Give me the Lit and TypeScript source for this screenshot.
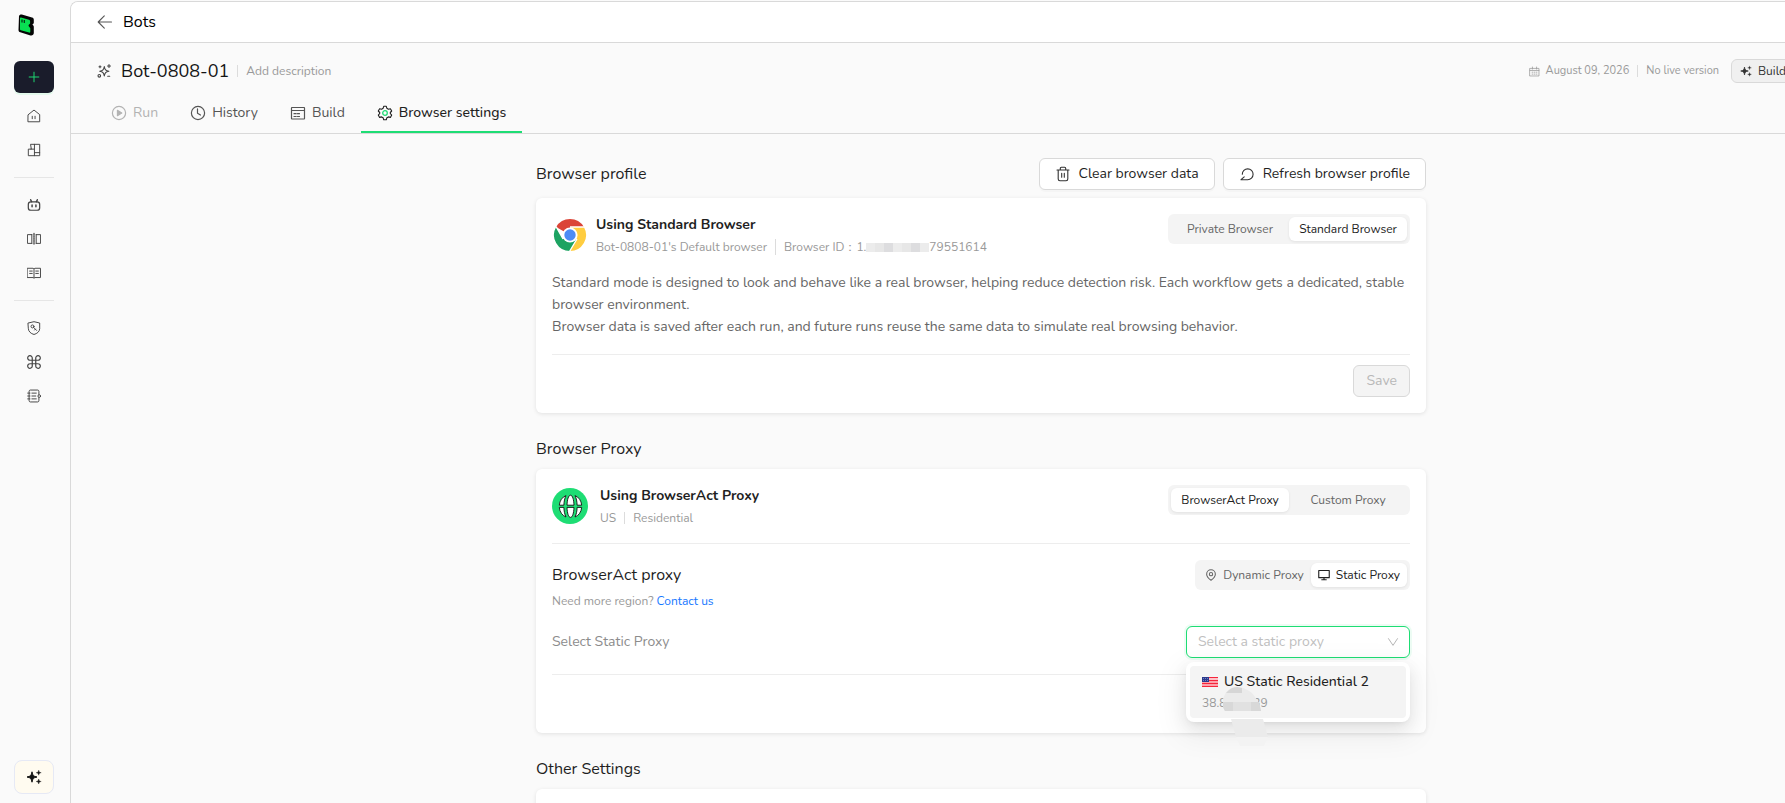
import { LitElement, html, css, svg, nothing, type TemplateResult } from "lit";
import { customElement, property, state } from "lit/decorators.js";

const line = (body: unknown, size = 16, view = 16) => html`<svg
  width=${size} height=${size} viewBox="0 0 ${view} ${view}" fill="none" stroke="currentColor"
  stroke-width="1.1" stroke-linecap="round" stroke-linejoin="round" aria-hidden="true">${body}</svg>`;

const sparkles = (size: number) => html`<svg width=${size} height=${size} viewBox="0 0 16 16" fill="currentColor" aria-hidden="true">
  <path d="M6 2.8C6.6 6.4 7.4 7.3 11 8 7.4 8.7 6.6 9.6 6 13.2 5.4 9.6 4.6 8.7 1 8 4.6 7.3 5.4 6.4 6 2.8Z" stroke="currentColor" stroke-width="1"/>
  <path d="M12.7 1.2c.3 1.7.7 2.200 2.500 2.500-1.800.3-2.200.8-2.500 2.500-.3-1.700-.7-2.200-2.500-2.500 1.800-.3 2.200-.8 2.500-2.500Z" stroke="currentColor" stroke-width=".4"/>
  <path d="M12.7 10c.3 1.700.7 2.200 2.500 2.500-1.800.3-2.200.8-2.500 2.500-.3-1.700-.7-2.200-2.500-2.500 1.800-.3 2.200-.8 2.500-2.500Z" stroke="currentColor" stroke-width=".4"/>
</svg>`;

const icons = {
  home: line(svg`<path d="M1.500 6.400 8 1.200l6.500 5.200v8.200h-13Z"/><path d="M6 8.300v2.800M9.200 8.300v2.800"/>`),
  layout: line(svg`<path d="M4.500 1.500h10v13h-13V7h3ZM4.500 7h3.500M8.500 1.500v13M8.500 11h6"/>`),
  bot: line(svg`<rect x="1.500" y="4.500" width="13" height="9.500" rx="3" stroke-width="1.400"/><path d="M4.200 2 5.200 4.300M11.800 2l-1 2.300M5.800 8v2M10.200 8v2" stroke-width="1.700"/>`),
  columns: line(svg`<path d="M5.500 3h-5v10h5M10.500 3h5v10h-5M5.500 3v10M10.500 3v10"/><path d="M8 2v12" stroke-width="2.200" stroke-dasharray="1 1.600" opacity=".7"/>`),
  book: line(svg`<path d="M.6 2.600h6.400l1 .8 1-.8h6.400v10.600H9l-1 .8-1-.8H.6ZM8 4v9.500M3 5.800h3M3 8.500h3M10 5.800h3M10 8.500h3"/>`),
  shield: line(svg`<path d="M1.500 2.300 8 .8l6.500 1.500v6.500C14.500 12 11.500 14.500 8 15.400 4.500 14.500 1.500 12 1.500 8.800Z"/><circle cx="6.300" cy="6.200" r="1.700"/><path d="m7.600 7.400 3.400 3.400M9.600 9.300l-.9 1"/>`),
  command: line(svg`<path d="M6 6h4v4H6ZM6 6H3.600A2.600 2.600 0 1 1 6 3.400ZM10 6V3.400A2.600 2.600 0 1 1 12.400 6ZM10 10h2.400A2.600 2.600 0 1 1 10 12.600ZM6 10v2.600A2.600 2.600 0 1 1 3.600 10Z" stroke-width="1.400"/>`),
  notebook: line(svg`<path d="M13.600 6.400V2.600c0-.8-.6-1.400-1.400-1.400H3.800c-.8 0-1.400.6-1.400 1.400v10.800c0 .8.6 1.400 1.400 1.400h8.400c.8 0 1.400-.6 1.400-1.400V9.800M.8 4.700h2.600M.8 8h2.600M.8 11.300h2.600M5.600 4.700h5M5.600 8h4.400M5.600 11.300h5"/><circle cx="14" cy="8.100" r="1.500"/>`),
  back: line(svg`<path d="M14.500 8h-13M7.300 1.800 1.200 8l6.100 6.200"/>`),
  magic: line(svg`<path d="M8.300 3.500c.6 3.300 1.400 4.100 4.600 4.700-3.200.6-4 1.400-4.600 4.700-.6-3.300-1.400-4.100-4.600-4.700 3.200-.6 4-1.400 4.600-4.700Z"/><path d="M13 1.500v3M11.500 3h3M4 2.800v2M3 3.800h2M11.700 13.200h2"/><circle cx="3.300" cy="12.800" r="1.300"/>`),
  run: line(svg`<circle cx="8" cy="8" r="6.600" stroke-width="1.200"/><path d="M6.400 5.300v5.400L10.800 8Z" fill="currentColor"/>`),
  history: line(svg`<circle cx="8" cy="8" r="6.600" stroke-width="1.200"/><path d="M7.500 3.800v4.500l3 1.700" stroke-width="1.200"/>`),
  build: line(svg`<rect x="1.500" y="2.500" width="13" height="11.500" rx=".4" stroke-width="1.200"/><path d="M1.500 5.500h13M4 8.700h2.200M7.500 8.700h2M4 11.500h2.200M7.500 11.500h2" stroke-width="1.200"/>`),
  gear: line(svg`<path d="M6.700 1.300h2.600l.6 2 1.500.9 2-.5 1.300 2.300-1.400 1.500v1l1.400 1.600-1.300 2.300-2-.5-1.500.8-.6 2.100H6.700L6.100 12.700 4.600 11.900l-2 .5-1.300-2.300 1.400-1.600v-1L1.300 6l1.300-2.300 2 .5 1.500-.9Z"/><circle cx="8" cy="8" r="2.300" stroke="#1edd74" stroke-width="1.300"/>`),
  calendar: line(svg`<path d="M1.500 3.500h13v11h-13ZM1.500 6.500h13M5 1.500v3M11 1.500v3"/><path d="M4.500 9h1M7.500 9h1M10.500 9h1M4.500 11.800h1M7.500 11.800h1M10.500 11.800h1"/>`, 11),
  trash: line(svg`<path d="M2 4h12M3.200 4v9c0 1 .7 1.700 1.700 1.700h6.200c1 0 1.700-.7 1.700-1.700V4M5.300 3.800V2.300c0-.6.4-1 1-1h3.400c.6 0 1 .4 1 1v1.500M6.700 7.200v4M9.300 7.200v4"/>`),
  refresh: line(svg`<path d="M3.300 8.300a5.400 5.400 0 1 1 5.400 5.400H2M2 13.700l3.200-2.900"/>`),
  pin: line(svg`<path d="M8 15C11.300 12.600 13.800 10.200 13.800 6.900a5.800 5.800 0 0 0-11.600 0C2.200 10.200 4.700 12.600 8 15Z" stroke-width="1.400"/><circle cx="8" cy="6.900" r="2.200" stroke-width="1.400"/>`, 12),
  screen: line(svg`<path d="M1 2h14v9.500H1ZM5 14.400h6M8 11.500v2.700" stroke-width="1.500"/>`, 12),
  chevron: line(svg`<path d="m2 3.500 6 9 6-9" stroke-width="1.300"/>`, 12),
};

const logo = html`<svg width="16" height="22" viewBox="0 0 16 22" aria-hidden="true">
  <path d="M1 2C1.300.9 2.600.2 3.800.5L14 3.400c1.200.3 1.800 1.100 1.800 2.300v3c0 .9-.8 1.400-1.500 1.800.7.6 1.500 1.300 1.500 2.300v6.200c0 1.800-1.700 2.900-3.300 2.400L2.300 18.300c-1.200-.3-1.800-1-1.800-2.200Z" fill="#050505"/>
  <path d="M2 4.200c0-.6.4-.9 1-.7l8 2.200c.7.2 1.100.7 1.100 1.400v2.300L10.600 11v1l1.700 2.300v3.500c0 .7-.5 1-1.200.8L2.900 16.300c-.6-.2-.9-.5-.9-1.100Z" fill="#08e052"/>
  <path d="M4 5.400v3M6.300 6.100v3" stroke="#062b12" stroke-width="1.200"/>
</svg>`;

const chrome = html`<svg class="chrome" width="36" height="36" viewBox="0 0 36 36" aria-hidden="true">
  <path d="M18 18 4.140 10A16 16 0 0 1 31.860 10Z" fill="#db4437"/>
  <path d="M4.140 10A16 16 0 0 0 18 34l6.900-12L18 18 11.100 22Z" fill="#1da362"/>
  <path d="M18 34 24.930 22 18 18V10H31.860A16 16 0 0 1 18 34Z" fill="#ffcd40"/>
  <path d="M18 10H32.500M24.930 22 17.500 34.500M11.070 22 4 9.500" stroke="#fff" stroke-width="1.400"/>
  <circle cx="18" cy="18" r="7.600" fill="#fff"/><circle cx="18" cy="18" r="5.700" fill="#4c8bf5"/>
</svg>`;

const globe = html`<svg width="36" height="36" viewBox="0 0 36 36" aria-hidden="true">
  <circle cx="18" cy="18" r="18" fill="#1edd74"/>
  <g fill="#fff" stroke="#101010" stroke-width=".9" stroke-linejoin="round">
    <path d="M7.300 17.200C7.700 12.600 10.300 9 14 7.600 12.600 10.400 12 13.500 11.900 17.200Z"/>
    <path d="M7.300 19.400C7.700 24 10.300 27.600 14 29 12.600 26.200 12 23.100 11.900 19.400Z"/>
    <path d="M15 17.200C15.200 11.500 16.500 7.200 18.500 7.200S21.800 11.500 22 17.200Z"/>
    <path d="M15 19.400C15.200 25.100 16.500 29.400 18.500 29.400S21.800 25.100 22 19.400Z"/>
    <path d="M29.700 17.200C29.300 12.600 26.700 9 23 7.600 24.400 10.400 25 13.500 25.100 17.200Z"/>
    <path d="M29.700 19.400C29.300 24 26.700 27.600 23 29 24.400 26.200 25 23.100 25.100 19.400Z"/>
  </g>
</svg>`;

const flag = html`<svg width="16" height="10" viewBox="0 0 16 10" role="img" aria-label="US">
  <path d="M0 0h16v10H0Z" fill="#ffc3c9"/>
  <path d="M0 .5h16M0 3.500h16M0 6.500h16M0 9.500h16" stroke="#f5263c"/>
  <path d="M0 5h16M0 8h16" stroke="#f97f8b"/>
  <path d="M0 0h7v5H0Z" fill="#2b3a8c"/>
  <path d="M1 1.500h5M1 3.500h5" stroke="#7280bd" stroke-dasharray="1 1"/>
</svg>`;

interface Option { label: string; icon?: TemplateResult; }

@customElement("segmented-control")
export class SegmentedControl extends LitElement {
  @property({ attribute: false }) options: Option[] = [];
  @property() name = "";
  @property() label = "";
  @property({ type: Number }) selected = 0;
  @property({ type: Boolean }) compact = false;

  static styles = css`
    :host { display: block; flex: none; }
    fieldset {
      display: grid; grid-template-columns: 118px 118px; margin: 0; padding: 3px; border: 0;
      border-radius: 6px; background: #f4f4f4;
    }
    fieldset.compact { grid-template-columns: auto auto; }
    legend, input { position: absolute; width: 1px; height: 1px; margin: 0; overflow: hidden; opacity: 0; }
    label {
      display: flex; align-items: center; justify-content: center; gap: 6px; height: 24px;
      border-radius: 6px; color: #666; font-size: 12px; cursor: pointer;
    }
    .compact label { padding: 0 7px; }
    .on { background: #fff; color: #222; box-shadow: 0 1px 3px rgba(0, 0, 0, 0.08); }
  `;

  render() {
    return html`<fieldset class=${this.compact ? "compact" : ""}>
      <legend>${this.label}</legend>
      ${this.options.map((o, i) => html`<label class=${i === this.selected ? "on" : ""}>
        <input type="radio" name=${this.name} .checked=${i === this.selected} @change=${() => (this.selected = i)} />
        ${o.icon ?? nothing}<span>${o.label}</span>
      </label>`)}
    </fieldset>`;
  }
}

@customElement("app-sidebar")
export class AppSidebar extends LitElement {
  static styles = css`
    :host {
      box-sizing: border-box; display: flex; flex-direction: column; flex: none; width: 70px;
      padding: 14px 16px 9px 14px; color: #444;
    }
    .logo { display: flex; padding-left: 4px; height: 22px; margin-bottom: 25px; }
    button {
      display: flex; align-items: center; justify-content: center; box-sizing: border-box;
      padding: 0; border: 0; background: none; color: inherit; cursor: pointer;
    }
    .add { height: 32px; margin-bottom: 6px; border-radius: 6px; background: #1a1c2b; color: #1edd74; box-shadow: 0 2px 0 #e3f9ec; }
    .add svg { width: 14px; height: 14px; }
    nav { display: flex; flex-direction: column; }
    nav button { height: 34px; }
    nav svg { width: 14px; height: 14px; }
    nav + nav { margin-top: 10px; padding-top: 10px; border-top: 1px solid #e6e6e6; }
    .assist {
      height: 34px; margin-top: auto; border: 1px solid #e6e9f5; border-radius: 8px;
      background: #fffbf0; color: #141414;
    }
  `;

  private item(label: string, icon: TemplateResult) {
    return html`<button aria-label=${label}>${icon}</button>`;
  }

  render() {
    return html`
      <div class="logo">${logo}</div>
      <button class="add" aria-label="New">${line(svg`<path d="M8 2.500v11M2.500 8h11"/>`)}</button>
      <nav>${this.item("Home", icons.home)}${this.item("Templates", icons.layout)}</nav>
      <nav>${this.item("Bots", icons.bot)}${this.item("Compare", icons.columns)}${this.item("Library", icons.book)}</nav>
      <nav>${this.item("Credentials", icons.shield)}${this.item("Integrations", icons.command)}${this.item("Logs", icons.notebook)}</nav>
      <button class="assist" aria-label="Assistant">${sparkles(16)}</button>
    `;
  }
}

@customElement("app-root")
export class AppRoot extends LitElement {
  @state() private tab = 3;

  static styles = css`
    :host {
      display: flex; height: 100vh; overflow: hidden; background: #fafafa; color: #1f1f1f;
      font: 14px/22px Nunito, "Nunito Sans", Lato, sans-serif;
    }
    * { box-sizing: border-box; }
    h1, h2, h3, p { margin: 0; font-weight: 400; }
    button { font: inherit; color: inherit; cursor: pointer; }
    main {
      display: flex; flex-direction: column; flex: 1 0 auto; min-width: 1821px; margin-top: 1px;
      border: 1px solid #d9d9d9; border-width: 1px 0 0 1px; border-radius: 8px 0 0 0; overflow: hidden;
    }
    .topbar {
      display: flex; align-items: center; gap: 8px; flex: none; height: 41px; padding: 0 24px;
      border-bottom: 1px solid #d9d9d9; background: #fff; color: #000; font-size: 16px;
    }
    .icon-button { display: flex; padding: 2px; border: 0; background: none; color: #555; }
    .heading { display: flex; align-items: center; gap: 8px; flex: none; padding: 13px 24px 9px; height: 52px; }
    .heading > svg { color: #444; }
    .heading svg { flex: none; }
    h1 { font-size: 18px; line-height: 28px; color: #141414; }
    .rule { width: 1px; height: 12px; background: #dcdcdc; }
    .note { font-size: 12px; color: #999; }
    .meta { display: flex; align-items: center; gap: 8px; margin-left: auto; color: #999; font-size: 11px; }
    .date { display: flex; align-items: center; gap: 6px; }
    .ai {
      display: flex; align-items: center; gap: 6px; width: 136px; height: 24px; margin-left: 4px;
      padding: 0 8px; border: 1px solid #d9d9d9; border-radius: 6px; background: #f0f0f0;
      color: #333; font-size: 12px;
    }
    .heading > svg { margin: 0 1px; }
    .tabs { display: flex; flex: none; padding: 0 24px; border-bottom: 1px solid #d9d9d9; }
    .tab {
      display: flex; align-items: center; gap: 6px; height: 38px; padding: 0 16px; border: 0;
      border-bottom: 2px solid transparent; background: none; color: #555;
    }
    .tab:disabled { color: #b3b3b3; cursor: default; }
    .tab.active { border-color: #1edd74; color: #1f1f1f; font-weight: 500; }
    .content {
      display: flex; flex-direction: column; gap: 24px; flex: 1; min-height: 0; width: 890px;
      margin: 0 auto; padding-top: 24px;
    }
    section { display: flex; flex-direction: column; gap: 8px; }
    h2, h3 { font-size: 16px; line-height: 24px; }
    .bar { display: flex; align-items: center; gap: 8px; }
    .bar h2 { flex: 1; }
    .button {
      display: flex; align-items: center; gap: 8px; height: 32px; padding: 0 15px;
      border: 1px solid #d9d9d9; border-radius: 6px; background: #fff; box-shadow: 0 2px 0 rgba(0, 0, 0, 0.02);
    }
    .button svg { color: #333; }
    .button:disabled { background: #f4f4f4; color: #b8b8b8; padding: 0 12px; cursor: default; box-shadow: none; }
    .card {
      display: flex; flex-direction: column; padding: 16px; border-radius: 6px; background: #fff;
      box-shadow: 0 1px 4px rgba(0, 0, 0, 0.1);
    }
    .summary, .row { display: flex; align-items: flex-start; }
    .summary > svg { flex: none; margin-top: 3px; margin-right: 12px; }
    .summary > .chrome { margin-right: 8px; }
    .summary > div { flex: 1; }
    .title { font-weight: 700; }
    .facts { display: flex; align-items: center; gap: 8px; color: #999; font-size: 12px; }
    .facts .rule.tall { height: 16px; }
    .masked { display: flex; align-items: center; }
    .mask { display: flex; height: 9px; }
    .mask i { width: 9px; background: #e7e7e7; }
    .mask i:nth-child(3n) { background: #dddddf; }
    .mask i:nth-child(3n + 1) { background: #ececec; }
    .text { margin-top: 14px; color: #666; }
    .actions {
      display: flex; justify-content: flex-end; margin-top: 16px; padding-top: 10px;
      border-top: 1px solid #ededed;
    }
    .proxy { margin-top: 14px; padding-top: 16px; border-top: 1px solid #ededed; }
    .row { align-items: center; justify-content: space-between; }
    a { color: #1677ff; text-decoration: none; }
    .field { margin-top: 14px; color: #8c8c8c; }
    .picker { position: relative; width: 224px; }
    select {
      display: block; width: 100%; height: 32px; padding: 0 11px; border: 1px solid #1edd74;
      border-radius: 6px; background: #fff; color: #bfbfbf; font: inherit; appearance: none; outline: 0;
      box-shadow: 0 0 0 2px rgba(30, 221, 116, 0.08);
    }
    .picker > svg { position: absolute; top: 10px; right: 11px; color: #b3b3b3; pointer-events: none; }
    .menu {
      position: absolute; z-index: 1; top: 36px; left: 0; width: 100%; padding: 4px; border-radius: 8px;
      background: #fff; box-shadow: 0 6px 16px rgba(0, 0, 0, 0.08), 0 3px 6px -4px rgba(0, 0, 0, 0.12), 0 9px 28px 8px rgba(0, 0, 0, 0.05);
    }
    .option { padding: 5px 12px; border-radius: 4px; background: #f4f4f4; color: #1f1f1f; line-height: 22px; }
    .option p { display: flex; align-items: center; gap: 6px; font-weight: 500; }
    .option .address { gap: 0; height: 20px; color: #999; font-size: 12px; font-weight: 400; }
    .smudge { position: absolute; top: 25px; left: 36px; pointer-events: none; }
    .blank { height: 64px; }
  `;

  render() {
    const tabs: [string, TemplateResult][] = [
      ["Run", icons.run], ["History", icons.history], ["Build", icons.build], ["Browser settings", icons.gear],
    ];
    return html`
      <app-sidebar></app-sidebar>
      <main>
        <header class="topbar">
          <button class="icon-button" aria-label="Back">${icons.back}</button><span>Bots</span>
        </header>
        <div class="heading">
          ${icons.magic}
          <h1>Bot-0808-01</h1><span class="rule"></span><span class="note">Add description</span>
          <div class="meta">
            <span class="date">${icons.calendar}August 09, 2026</span><span class="rule"></span><span>No live version</span>
            <button class="ai">${sparkles(12)}Build</button>
          </div>
        </div>
        <div class="tabs" role="tablist">
          ${tabs.map(([label, icon], i) => html`<button role="tab" class="tab ${i === this.tab ? "active" : ""}"
            aria-selected=${i === this.tab} ?disabled=${i === 0} @click=${() => (this.tab = i)}>${icon}${label}</button>`)}
        </div>
        <div class="content">
          <section>
            <div class="bar">
              <h2>Browser profile</h2>
              <button class="button">${icons.trash}Clear browser data</button>
              <button class="button">${icons.refresh}Refresh browser profile</button>
            </div>
            <div class="card">
              <div class="summary">
                ${chrome}
                <div>
                  <p class="title">Using Standard Browser</p>
                  <p class="facts"><span>Bot-0808-01's Default browser</span><span class="rule tall"></span>
                    <span class="masked">Browser ID：1.<span class="mask">${Array.from({ length: 7 }, () => html`<i></i>`)}</span>79551614</span></p>
                </div>
                <segmented-control name="browser" label="Browser mode" .selected=${1}
                  .options=${[{ label: "Private Browser" }, { label: "Standard Browser" }]}></segmented-control>
              </div>
              <p class="text">Standard mode is designed to look and behave like a real browser, helping reduce detection risk. Each workflow gets a dedicated, stable browser environment.<br />Browser data is saved after each run, and future runs reuse the same data to simulate real browsing behavior.</p>
              <div class="actions"><button class="button" disabled>Save</button></div>
            </div>
          </section>
          <section>
            <h2>Browser Proxy</h2>
            <div class="card">
              <div class="summary">
                ${globe}
                <div>
                  <p class="title">Using BrowserAct Proxy</p>
                  <p class="facts"><span>US</span><span class="rule"></span><span>Residential</span></p>
                </div>
                <segmented-control name="proxy" label="Proxy provider"
                  .options=${[{ label: "BrowserAct Proxy" }, { label: "Custom Proxy" }]}></segmented-control>
              </div>
              <div class="proxy">
                <div class="row">
                  <h3>BrowserAct proxy</h3>
                  <segmented-control compact name="kind" label="Proxy type" .selected=${1}
                    .options=${[{ label: "Dynamic Proxy", icon: icons.pin }, { label: "Static Proxy", icon: icons.screen }]}></segmented-control>
                </div>
                <p class="note">Need more region? <a href="#contact">Contact us</a></p>
                <div class="row field">
                  <label for="static-proxy">Select Static Proxy</label>
                  <div class="picker">
                    <select id="static-proxy"><option>Select a static proxy</option></select>
                    ${icons.chevron}
                    <div class="menu" role="listbox" aria-label="Static proxies">
                      <div class="option" role="option" aria-selected="false">
                        <p>${flag}US Static Residential 2</p>
                        <p class="address">38.8<span class="mask"><i></i><i></i><i></i></span>39</p>
                      </div>
                      <svg class="smudge" width="50" height="60" viewBox="0 0 50 60" aria-hidden="true">
                        <path d="M1 12C4 3 9 0 15 0s11 3 15 6l6 8 3 10H3L1 20Z" fill="#ebebeb"/>
                        <path d="M4 6C7 2 11 0 15 0l5 1v5Z" fill="#d6d6d6"/>
                        <path d="M1 15h36l2 9H3L1 20Z" fill="#e1e1e1"/>
                        <path d="M1 15h10v9H3L1 20ZM29 15h8l2 9H29Z" fill="#d8d8d8"/>
                        <path d="M9 32h32l5 18H14Z" fill="#ebebeb"/>
                        <path d="M14 50h32l-4 9H18Z" fill="#f3f3f3"/>
                      </svg>
                    </div>
                  </div>
                </div>
              </div>
              <div class="actions"><button class="button" disabled>Save</button></div>
            </div>
          </section>
          <section>
            <h2>Other Settings</h2>
            <div class="card blank"></div>
          </section>
        </div>
      </main>
    `;
  }
}
